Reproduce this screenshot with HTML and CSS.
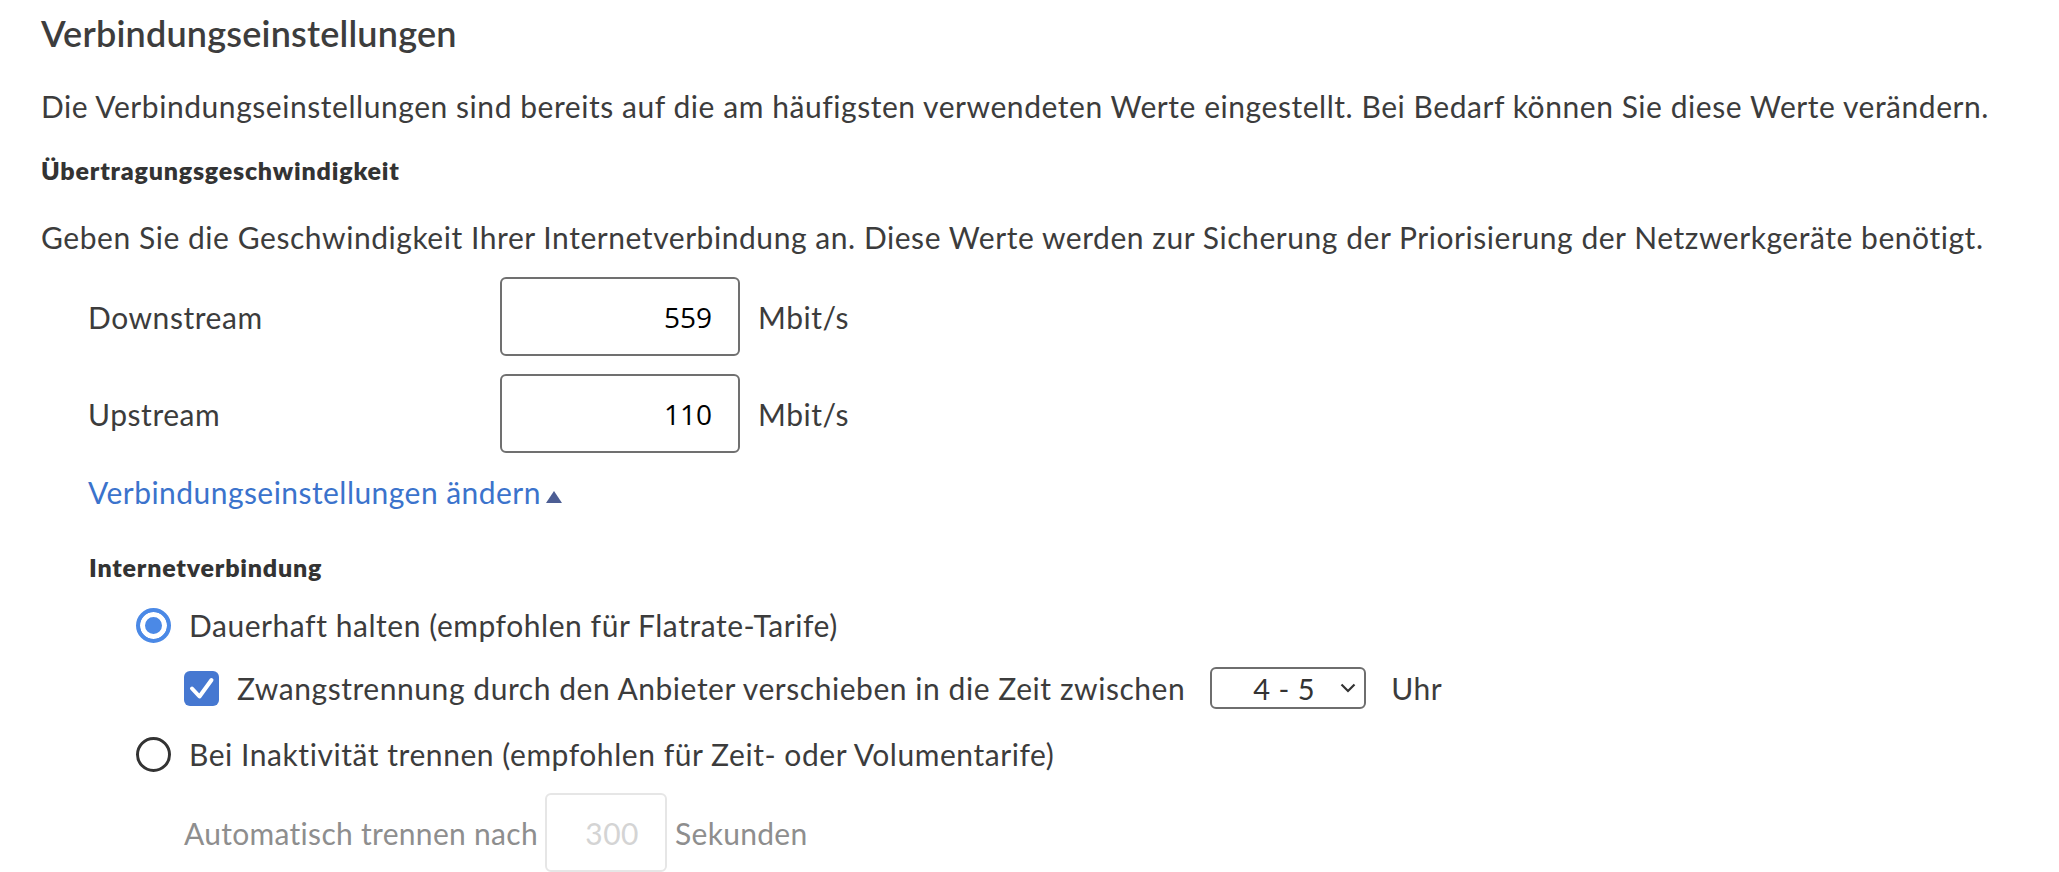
FILE: index.html
```html
<!DOCTYPE html>
<html lang="de">
<head>
<meta charset="utf-8">
<title>Verbindungseinstellungen</title>
<link rel="stylesheet" href="styles.css">
</head>
<body>
<main class="page">
  <h1 class="title">Verbindungseinstellungen</h1>
  <p class="text first">Die Verbindungseinstellungen sind bereits auf die am häufigsten verwendeten Werte eingestellt. Bei Bedarf können Sie diese Werte verändern.</p>
  <h2 class="subtitle speed-title">Übertragungsgeschwindigkeit</h2>
  <p class="text second">Geben Sie die Geschwindigkeit Ihrer Internetverbindung an. Diese Werte werden zur Sicherung der Priorisierung der Netzwerkgeräte benötigt.</p>

  <div class="speed">
    <div class="speed-row">
      <label class="speed-label" for="down">Downstream</label>
      <input class="num" id="down" type="text" value="559">
      <span class="unit">Mbit/s</span>
    </div>
    <div class="speed-row">
      <label class="speed-label" for="up">Upstream</label>
      <input class="num" id="up" type="text" value="110">
      <span class="unit">Mbit/s</span>
    </div>
  </div>

  <a class="toggle" href="#">Verbindungseinstellungen ändern<span class="caret"></span></a>

  <section class="conn">
    <h3 class="subtitle conn-title">Internetverbindung</h3>
    <div class="options">
      <label class="option opt-keep">
        <input class="radio" type="radio" name="conn" checked>
        <span>Dauerhaft halten (empfohlen für Flatrate-Tarife)</span>
      </label>
      <div class="option sub opt-force">
        <span class="check" aria-hidden="true">
          <svg viewBox="0 0 35 35" width="35" height="35"><path d="M8 17.5 L15.5 25.5 L27.5 9" fill="none" stroke="#fff" stroke-width="4" stroke-linecap="round" stroke-linejoin="round"/></svg>
        </span>
        <span>Zwangstrennung durch den Anbieter verschieben in die Zeit zwischen</span>
        <span class="select-wrap">
          <select class="hour"><option>4 - 5</option></select>
          <svg class="chev" viewBox="0 0 16 10" width="16" height="10"><path d="M1.5 1.5 L8 8 L14.5 1.5" fill="none" stroke="#333" stroke-width="2.2"/></svg>
        </span>
        <span>Uhr</span>
      </div>
      <label class="option opt-idle">
        <input class="radio" type="radio" name="conn">
        <span>Bei Inaktivität trennen (empfohlen für Zeit- oder Volumentarife)</span>
      </label>
      <div class="option sub disabled opt-auto">
        <span>Automatisch trennen nach</span>
        <input class="num small" type="text" value="300" disabled>
        <span>Sekunden</span>
      </div>
    </div>
  </section>
</main>
</body>
</html>
```
FILE: styles.css
```css
html, body {
  margin: 0;
  padding: 0;
  background: #fff;
}

body {
  font-family: "Lato", "Liberation Sans", sans-serif;
  color: #3c3c3c;
  overflow: hidden;
}

.page {
  padding: 9px 0 0 41px;
}

.title {
  margin: 0;
  font-size: 36px;
  font-weight: 600;
  line-height: 48px;
  letter-spacing: 0.2px;
  color: #3d3d3d;
}

.text {
  margin: 0;
  font-size: 30px;
  line-height: 40px;
  letter-spacing: 0.55px;
}

.text.first { margin-top: 29px; }
.text.second { margin-top: 31px; }

.subtitle {
  margin: 0;
  font-size: 25px;
  font-weight: 800;
  line-height: 32px;
  letter-spacing: 0.8px;
  color: #333;
}

.speed-title { margin-top: 28px; }

.speed {
  margin-top: 20px;
  padding-left: 47px;
  display: flex;
  flex-direction: column;
  gap: 18px;
}

.speed-row {
  display: flex;
  align-items: center;
  height: 79px;
  font-size: 30px;
  line-height: 40px;
  letter-spacing: 0.55px;
}

.speed-label {
  flex: 0 0 412px;
}

.num {
  box-sizing: border-box;
  width: 240px;
  height: 79px;
  margin: 0;
  padding: 0 26px 0 10px;
  border: 2px solid #707070;
  border-radius: 6px;
  text-align: right;
  font-family: "Open Sans", "Noto Sans", sans-serif;
  font-size: 28px;
  letter-spacing: 0;
  color: #000;
  background: #fff;
  outline: none;
}

.unit {
  margin-left: 18px;
}

.toggle {
  display: block;
  width: max-content;
  margin: 19px 0 0 47px;
  font-size: 30px;
  line-height: 40px;
  letter-spacing: 0.45px;
  color: #3b73cc;
  text-decoration: none;
}

.caret {
  display: inline-block;
  width: 0;
  height: 0;
  margin-left: 5px;
  border-left: 8px solid transparent;
  border-right: 8px solid transparent;
  border-bottom: 12px solid #4d5e94;
  vertical-align: 1px;
}

.conn {
  padding-left: 48px;
}

.conn-title { margin-top: 39px; }

.options {
  margin-left: 47px;
  font-size: 30px;
  line-height: 40px;
  letter-spacing: 0.55px;
}

.option {
  display: flex;
  align-items: center;
  height: 44px;
}

.opt-keep { margin-top: 20px; }
.opt-force { margin-top: 19px; }
.opt-idle { margin-top: 22px; }
.opt-auto { margin-top: 17px; height: 79px; }

.sub {
  padding-left: 48px;
}

.radio {
  appearance: none;
  -webkit-appearance: none;
  box-sizing: border-box;
  flex: 0 0 35px;
  width: 35px;
  height: 35px;
  margin: 0 18px 0 0;
  border: 3px solid #333;
  border-radius: 50%;
  background: #fff;
}

.radio:checked {
  border: 4px solid #4b89e6;
  background: #4b89e6;
  box-shadow: inset 0 0 0 5px #fff;
}

.check {
  flex: 0 0 35px;
  width: 35px;
  height: 35px;
  margin-right: 18px;
  border-radius: 6px;
  background: #4678d1;
  display: flex;
}

.select-wrap {
  position: relative;
  display: inline-flex;
  margin: 0 25px;
}

.hour {
  appearance: none;
  -webkit-appearance: none;
  box-sizing: border-box;
  width: 156px;
  height: 42px;
  margin: 0;
  padding: 0 0 0 41px;
  border: 2px solid #6e6e6e;
  border-radius: 6px;
  background: #fff;
  font-family: "Lato", "Liberation Sans", sans-serif;
  font-size: 29px;
  letter-spacing: 0.5px;
  color: #333;
  outline: none;
}

.chev {
  position: absolute;
  right: 10px;
  top: 16px;
  pointer-events: none;
}

.disabled {
  color: #8e8e8e;
  letter-spacing: 0.3px;
}

.num.small {
  width: 122px;
  margin: 0 8px 0 7px;
  border: 2px solid #e6e6e6;
  font-family: "Lato", "Liberation Sans", sans-serif;
  font-size: 30px;
  letter-spacing: 0.5px;
  color: #d4d4d4;
  -webkit-text-fill-color: #d4d4d4;
}
```
